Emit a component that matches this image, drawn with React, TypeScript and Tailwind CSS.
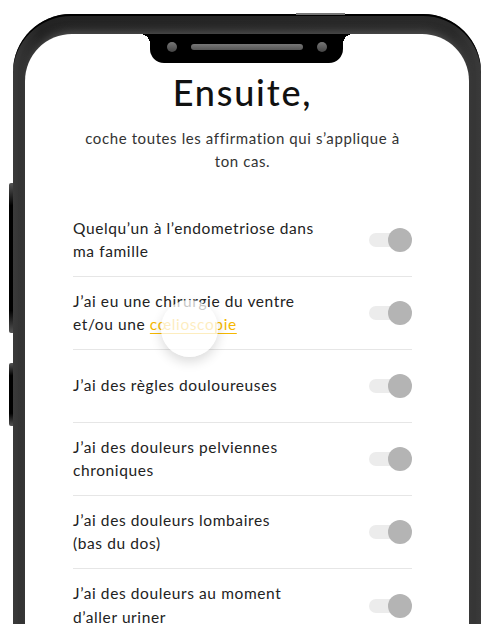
import React from 'react'

const ITEMS: { lines: React.ReactNode }[] = [
  { lines: <>Quelqu’un à l’endometriose dans<br />ma famille</> },
  {
    lines: (
      <>
        J’ai eu une chirurgie du ventre
        <br />
        et/ou une{' '}
        <span className="text-[#f5b700] underline underline-offset-[3px] decoration-[1px]">cœlioscopie</span>
      </>
    ),
  },
  { lines: <>J’ai des règles douloureuses</> },
  { lines: <>J’ai des douleurs pelviennes<br />chroniques</> },
  { lines: <>J’ai des douleurs lombaires<br />(bas du dos)</> },
  { lines: <>J’ai des douleurs au moment<br />d’aller uriner</> },
]

function Toggle() {
  return (
    <div className="relative w-[43px] h-[24px] shrink-0 flex items-center">
      <div className="w-[38px] h-[14px] rounded-full bg-[#ececec]" />
      <div className="absolute right-0 top-0 w-[24px] h-[24px] rounded-full bg-[#b4b4b4]" />
    </div>
  )
}

export default function App() {
  return (
    <div className="w-[489px] h-[624px] overflow-hidden bg-white font-['Lato',sans-serif]">
      <div className="relative ml-[13px] mt-[14px] w-[468px] h-[700px]">
        {/* side buttons */}
        <div className="absolute -left-[4px] top-[169px] w-[4px] h-[150px] rounded-l-[2px] bg-[linear-gradient(to_bottom,#555,#000_15%,#000_85%,#555)]" />
        <div className="absolute -left-[4px] top-[349px] w-[4px] h-[63px] rounded-l-[2px] bg-[linear-gradient(to_bottom,#555,#000_20%,#000_80%,#555)]" />
        {/* top button */}
        <div className="absolute left-[283px] -top-[1px] w-[49px] h-[2px] bg-[#777]" />

        {/* frame */}
        <div className="h-full rounded-t-[58px] bg-[linear-gradient(to_right,#3a3a3a,#232323_6%,#2a2a2a_94%,#3a3a3a)] px-[12px] pt-[20px] shadow-[inset_0_2px_0_#000]">
          <div className="relative h-full rounded-t-[47px] bg-white shadow-[0_-6px_10px_-4px_rgba(90,90,90,0.9)]">
            {/* notch */}
            <div className="absolute left-[125px] top-0 w-[193px] h-[29px] rounded-b-[14px] bg-black flex items-center justify-center gap-[14px]">
              <div className="absolute -left-[10px] top-0 w-[10px] h-[10px] bg-[radial-gradient(circle_at_0_100%,transparent_10px,#000_10px)]" />
              <div className="absolute -right-[10px] top-0 w-[10px] h-[10px] bg-[radial-gradient(circle_at_100%_100%,transparent_10px,#000_10px)]" />
              <div className="w-[10px] h-[10px] rounded-full bg-[linear-gradient(to_bottom,#777,#444)] mb-[4px]" />
              <div className="w-[112px] h-[6px] rounded-full bg-[linear-gradient(to_bottom,#777,#555)] mb-[4px]" />
              <div className="w-[10px] h-[10px] rounded-full bg-[linear-gradient(to_bottom,#777,#444)] mb-[4px]" />
            </div>

            <div className="ml-[48px] w-[339px] pt-[37px] flex flex-col">
              <h1 className="text-center text-[36px] leading-[42px] font-medium tracking-[1.8px] text-[#111]">Ensuite,</h1>
              <p className="mt-[14px] text-center text-[15px] leading-[23px] text-[#333] tracking-[0.6px] whitespace-nowrap">
                coche toutes les affirmation qui s’applique à
                <br />
                ton cas.
              </p>

              <div className="mt-[31px] flex flex-col">
                {ITEMS.map((item, i) => (
                  <div
                    key={i}
                    className={`h-[73px] flex items-center justify-between ${i < ITEMS.length - 1 ? 'border-b border-[#e6e6e6]' : ''}`}
                  >
                    <div className="text-[15.5px] leading-[23.5px] text-[#222] tracking-[0.6px]">{item.lines}</div>
                    <Toggle />
                  </div>
                ))}
              </div>
            </div>

            {/* tap ripple */}
            <div className="absolute left-[136px] top-[266px] w-[57px] h-[57px] rounded-full bg-white/75 shadow-[0_5px_12px_rgba(0,0,0,0.14)]" />
          </div>
        </div>
      </div>
    </div>
  )
}
